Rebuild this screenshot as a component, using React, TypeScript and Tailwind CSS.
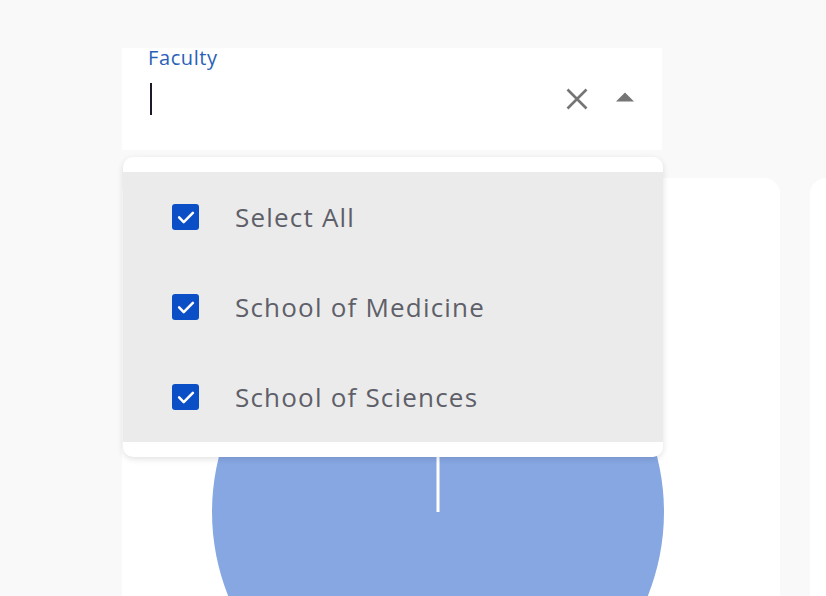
import React from "react";

const options = ["Select All", "School of Medicine", "School of Sciences"];

const CheckIcon = () => (
  <span className="flex h-[26px] w-[27px] items-center justify-center rounded-[3px] bg-[#0b4fc7]">
    <svg width="22" height="22" viewBox="0 0 24 24" fill="none">
      <path d="M4.5 12.5l5 5 10-10" stroke="white" strokeWidth="2.8" strokeLinecap="round" strokeLinejoin="round" />
    </svg>
  </span>
);

export default function App() {
  return (
    <div className="h-[596px] w-[826px] overflow-hidden bg-[#f9f9f9] pl-[122px] pt-[48px] font-['Open_Sans',sans-serif]">
      <div className="relative">
        {/* Filter input */}
        <div className="h-[102px] w-[540px] bg-white pl-[26px] pr-[28px]">
          <div className="text-[20px] leading-[20px] tracking-[0.6px] text-[#2a5fb8]">Faculty</div>
          <div className="mt-[15px] flex items-center">
            <span className="ml-[2px] h-[32px] w-[2px] bg-[#1a1a2a]" />
            <div className="flex-1" />
            <svg width="22" height="22" viewBox="0 0 22 22" className="mr-[28px]">
              <path d="M1.5 1.5l19 19M20.5 1.5l-19 19" stroke="#757575" strokeWidth="2.6" />
            </svg>
            <svg width="18" height="10" viewBox="0 0 18 10" className="-mt-[4px]">
              <path d="M0 9.5L9 0.5l9 9z" fill="#757575" />
            </svg>
          </div>
        </div>

        {/* Cards */}
        <div className="mt-[28px] flex gap-[30px]">
          <div className="h-[500px] w-[658px] shrink-0 rounded-2xl bg-white">
            <svg width="460" height="460" viewBox="0 0 460 460" className="ml-[86px] mt-[104px]">
              <circle cx="230" cy="230" r="226" fill="#87a7e3" />
              <line x1="230" y1="4" x2="230" y2="230" stroke="white" strokeWidth="3" />
            </svg>
          </div>
          <div className="h-[500px] w-[200px] shrink-0 rounded-2xl bg-white" />
        </div>

        {/* Dropdown */}
        <div className="absolute left-[1px] top-[109px] w-[540px] rounded-[10px] bg-white py-[15px] shadow-[0_2px_6px_rgba(0,0,0,0.12)]">
          <ul className="bg-[#ebebeb]">
            {options.map((o) => (
              <li key={o} className="flex h-[90px] items-center pl-[49px]">
                <CheckIcon />
                <span className="ml-[36px] text-[26px] tracking-[1.2px] text-[#5e5f69]">{o}</span>
              </li>
            ))}
          </ul>
        </div>
      </div>
    </div>
  );
}
